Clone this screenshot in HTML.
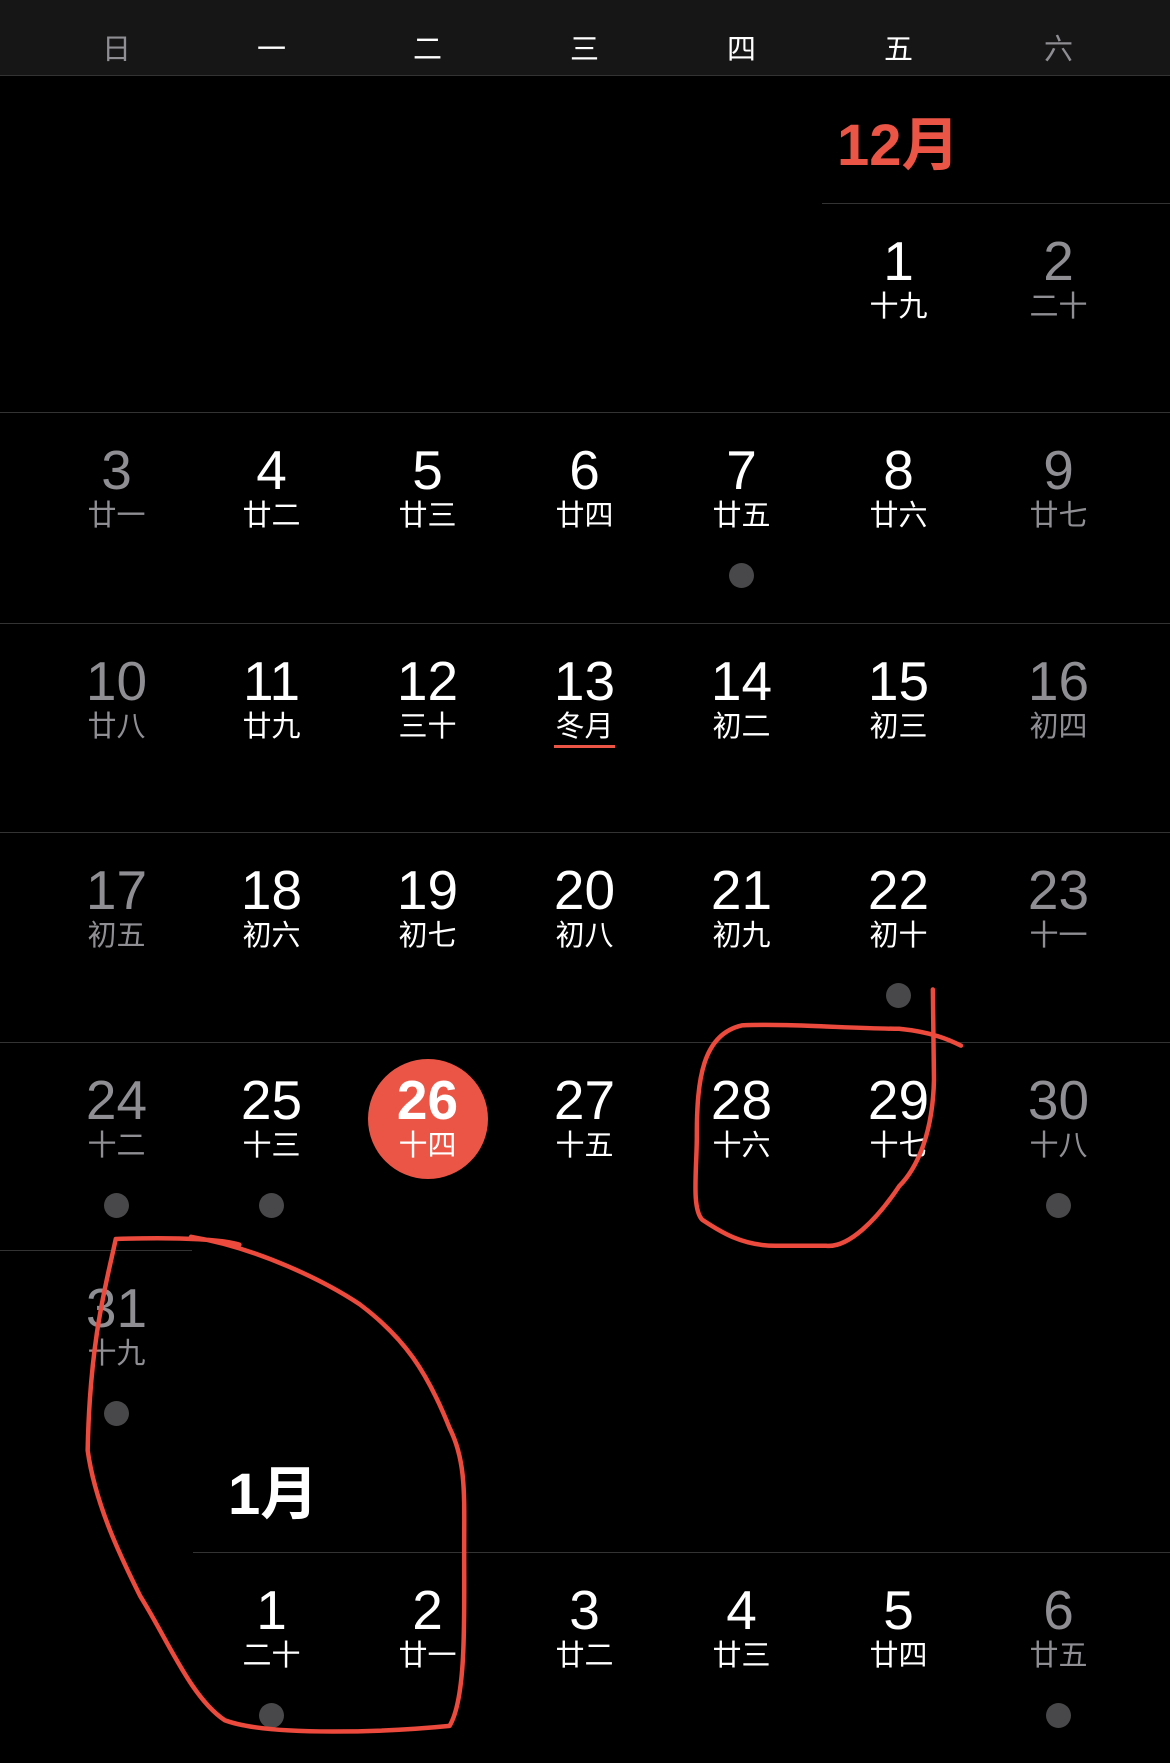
<!DOCTYPE html>
<html><head><meta charset="utf-8"><style>
*{margin:0;padding:0;box-sizing:border-box}
body{width:1170px;height:1763px;background:#000;position:relative;overflow:hidden;font-family:"Liberation Sans","Noto Sans CJK SC",sans-serif;color:#fff}
.hd{position:absolute;left:0;top:0;width:1170px;height:76px;background:#161616;border-bottom:1px solid #333}
.h{position:absolute;top:33px;width:157px;text-align:center;font-size:29px;line-height:34px;font-weight:400}
.g{color:#8e8e93}
.ln{position:absolute;height:1px;background:#333}
.d{position:absolute;width:157px;text-align:center}
.n{font-size:55px;line-height:60px;margin-top:28px}
.l{font-size:29px;line-height:34px;margin-top:-1px;font-weight:400}
.dot{width:25px;height:25px;border-radius:50%;background:#48484a;margin:30px auto 0}
.m{position:absolute;font-weight:bold;font-size:58px;line-height:64px}
</style></head><body>
<div class="hd">
<div class="h g" style="left:38px">日</div>
<div class="h" style="left:193px">一</div>
<div class="h" style="left:349px">二</div>
<div class="h" style="left:506px">三</div>
<div class="h" style="left:663px">四</div>
<div class="h" style="left:820px">五</div>
<div class="h g" style="left:980px">六</div>
</div>

<div class="m" style="left:837px;top:114px;color:#eb5545">12月</div>
<div class="ln" style="left:822px;top:203px;width:348px"></div>
<div class="d" style="left:820px;top:203px"><div class="n">1</div><div class="l">十九</div></div>
<div class="d g" style="left:980px;top:203px"><div class="n">2</div><div class="l">二十</div></div>

<div class="ln" style="left:0;top:412px;width:1170px"></div>
<div class="d g" style="left:38px;top:412px"><div class="n">3</div><div class="l">廿一</div></div>
<div class="d" style="left:193px;top:412px"><div class="n">4</div><div class="l">廿二</div></div>
<div class="d" style="left:349px;top:412px"><div class="n">5</div><div class="l">廿三</div></div>
<div class="d" style="left:506px;top:412px"><div class="n">6</div><div class="l">廿四</div></div>
<div class="d" style="left:663px;top:412px"><div class="n">7</div><div class="l">廿五</div><div class="dot"></div></div>
<div class="d" style="left:820px;top:412px"><div class="n">8</div><div class="l">廿六</div></div>
<div class="d g" style="left:980px;top:412px"><div class="n">9</div><div class="l">廿七</div></div>

<div class="ln" style="left:0;top:623px;width:1170px"></div>
<div class="d g" style="left:38px;top:623px"><div class="n">10</div><div class="l">廿八</div></div>
<div class="d" style="left:193px;top:623px"><div class="n">11</div><div class="l">廿九</div></div>
<div class="d" style="left:349px;top:623px"><div class="n">12</div><div class="l">三十</div></div>
<div class="d" style="left:506px;top:623px"><div class="n">13</div><div class="l">冬月</div></div>
<div style="position:absolute;left:554px;top:745px;width:61px;height:3px;background:#eb5545"></div>
<div class="d" style="left:663px;top:623px"><div class="n">14</div><div class="l">初二</div></div>
<div class="d" style="left:820px;top:623px"><div class="n">15</div><div class="l">初三</div></div>
<div class="d g" style="left:980px;top:623px"><div class="n">16</div><div class="l">初四</div></div>

<div class="ln" style="left:0;top:832px;width:1170px"></div>
<div class="d g" style="left:38px;top:832px"><div class="n">17</div><div class="l">初五</div></div>
<div class="d" style="left:193px;top:832px"><div class="n">18</div><div class="l">初六</div></div>
<div class="d" style="left:349px;top:832px"><div class="n">19</div><div class="l">初七</div></div>
<div class="d" style="left:506px;top:832px"><div class="n">20</div><div class="l">初八</div></div>
<div class="d" style="left:663px;top:832px"><div class="n">21</div><div class="l">初九</div></div>
<div class="d" style="left:820px;top:832px"><div class="n">22</div><div class="l">初十</div><div class="dot"></div></div>
<div class="d g" style="left:980px;top:832px"><div class="n">23</div><div class="l">十一</div></div>

<div class="ln" style="left:0;top:1042px;width:1170px"></div>
<div class="d g" style="left:38px;top:1042px"><div class="n">24</div><div class="l">十二</div><div class="dot"></div></div>
<div class="d" style="left:193px;top:1042px"><div class="n">25</div><div class="l">十三</div><div class="dot"></div></div>
<div style="position:absolute;left:368px;top:1059px;width:120px;height:120px;border-radius:50%;background:#eb5545"></div>
<div class="d" style="left:349px;top:1042px"><div class="n" style="font-weight:bold">26</div><div class="l">十四</div></div>
<div class="d" style="left:506px;top:1042px"><div class="n">27</div><div class="l">十五</div></div>
<div class="d" style="left:663px;top:1042px"><div class="n">28</div><div class="l">十六</div></div>
<div class="d" style="left:820px;top:1042px"><div class="n">29</div><div class="l">十七</div></div>
<div class="d g" style="left:980px;top:1042px"><div class="n">30</div><div class="l">十八</div><div class="dot"></div></div>

<div class="ln" style="left:0;top:1250px;width:192px"></div>
<div class="d g" style="left:38px;top:1250px"><div class="n">31</div><div class="l">十九</div><div class="dot"></div></div>

<div class="m" style="left:228px;top:1463px">1月</div>
<div class="ln" style="left:193px;top:1552px;width:977px"></div>
<div class="d" style="left:193px;top:1552px"><div class="n">1</div><div class="l">二十</div><div class="dot"></div></div>
<div class="d" style="left:349px;top:1552px"><div class="n">2</div><div class="l">廿一</div></div>
<div class="d" style="left:506px;top:1552px"><div class="n">3</div><div class="l">廿二</div></div>
<div class="d" style="left:663px;top:1552px"><div class="n">4</div><div class="l">廿三</div></div>
<div class="d" style="left:820px;top:1552px"><div class="n">5</div><div class="l">廿四</div></div>
<div class="d g" style="left:980px;top:1552px"><div class="n">6</div><div class="l">廿五</div><div class="dot"></div></div>

<svg style="position:absolute;left:0;top:0" width="1170" height="1763" viewBox="0 0 1041 1568" preserveAspectRatio="none">
<g fill="none" stroke="#eb4a3c" stroke-width="4" stroke-linecap="round" stroke-linejoin="round">
<path d="M830,880 L831,960 C830,1010 815,1040 800,1055 C780,1085 755,1110 735,1108 L690,1108 C660,1108 640,1095 625,1085 C615,1075 620,1040 620,1010 C620,960 625,920 660,912 C700,910 760,915 800,915 C830,918 845,925 855,930"/>
<path d="M213,1107 C190,1100 130,1101 103,1102 C95,1140 80,1190 78,1290 C85,1340 110,1390 125,1420 C150,1460 170,1510 200,1530 C240,1545 350,1540 400,1535 C415,1510 413,1440 413,1380 C413,1330 415,1300 400,1270 C380,1220 360,1190 320,1160 C290,1140 230,1110 170,1100"/>
</g></svg>
</body></html>
